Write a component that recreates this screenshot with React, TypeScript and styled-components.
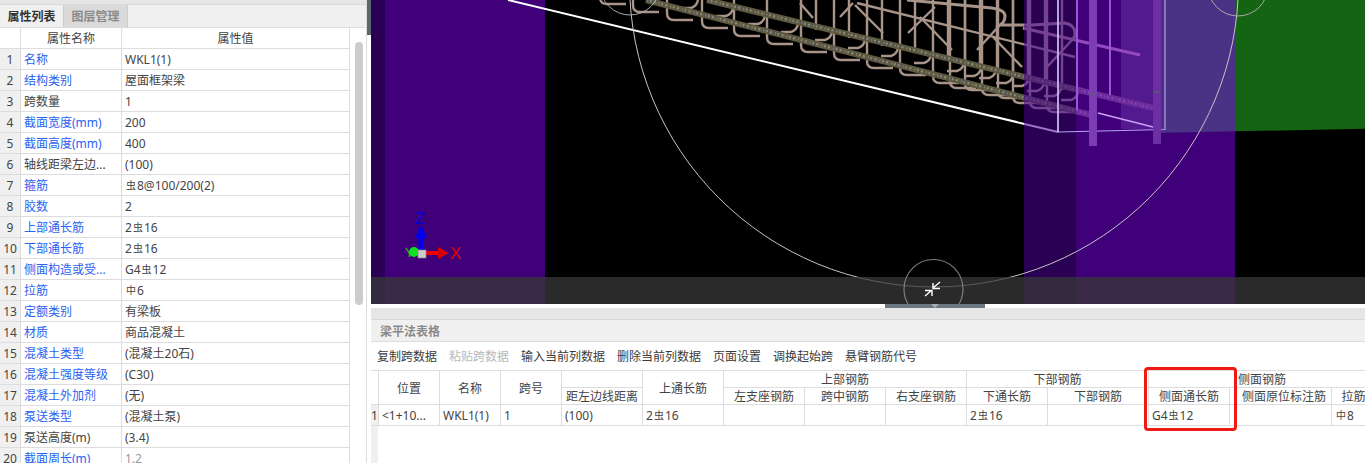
import React from 'react';
import styled, { createGlobalStyle } from 'styled-components';

const GlobalStyle = createGlobalStyle`
  html, body {
    margin: 0;
    padding: 0;
    background: #ffffff;
    overflow: hidden;
  }
  body {
    font-family: "Noto Sans", "Noto Sans CJK SC", sans-serif;
    font-size: 12px;
    color: #444444;
  }
`;

const Page = styled.div`
  display: flex;
  width: 1365px;
  height: 463px;
  overflow: hidden;
`;

/* 左侧属性面板 */
const SidePanel = styled.div`
  display: flex;
  flex-direction: column;
  flex: none;
  width: 366px;
  border-right: 1px solid #dddddd;
`;

const PanelTop = styled.div`
  flex: none;
  height: 4px;
  background: #e6e6e6;
  border-bottom: 1px solid #dadada;
`;

const TabBar = styled.div`
  display: flex;
  flex: none;
  height: 22px;
  background: #f0f0f0;
  border-bottom: 1px solid #dcdcdc;
`;

const Tab = styled.div<{ $active?: boolean }>`
  display: flex;
  align-items: center;
  justify-content: center;
  width: 63px;
  font-weight: 700;
  color: ${(p) => (p.$active ? '#333333' : '#8a8a8a')};
  background: ${(p) => (p.$active ? '#f0f0f0' : '#dadada')};
  border-right: 1px solid #cccccc;
`;

const SideBody = styled.div`
  display: flex;
  flex: 1;
  min-height: 0;
  overflow: hidden;
`;

const PropTable = styled.div`
  flex: none;
  width: 350px;
`;

const PropRow = styled.div`
  display: grid;
  grid-template-columns: 21px 101px 228px;
  height: 21px;
`;

const PropCell = styled.div<{ $kind?: 'index' | 'head' | 'link' | 'muted' }>`
  display: flex;
  align-items: center;
  justify-content: ${(p) => (p.$kind === 'index' || p.$kind === 'head' ? 'center' : 'flex-start')};
  padding: ${(p) => (p.$kind === 'index' ? '0' : p.$kind === 'head' ? '0' : '0 3px')};
  border-right: 1px solid #dddddd;
  border-bottom: 1px solid #dddddd;
  white-space: nowrap;
  overflow: hidden;
  background: ${(p) => (p.$kind === 'index' ? '#f0f0f0' : '#ffffff')};
  color: ${(p) => (p.$kind === 'link' ? '#2a62f2' : p.$kind === 'muted' ? '#9a9a9a' : '#444444')};
`;

const ScrollTrack = styled.div`
  flex: 1;
  padding: 14px 0 0 5px;
`;

const ScrollThumb = styled.div`
  width: 8px;
  height: 263px;
  border-radius: 4px;
  background: #cccccc;
`;

const SideEdge = styled.div`
  flex: none;
  width: 4px;
  height: 463px;
`;

const SideEdgeThumb = styled.div`
  height: 35px;
  background: #5c686c;
`;

/* 右侧 */
const MainColumn = styled.div`
  display: flex;
  flex-direction: column;
  flex: 1;
  min-width: 0;
`;

const Viewport = styled.svg`
  display: block;
  flex: none;
  width: 994px;
  height: 304px;
`;

const SplitStrip = styled.div`
  flex: none;
  height: 4px;
  padding-left: 514px;
`;

const SplitHandle = styled.div`
  display: flex;
  justify-content: center;
  width: 100px;
  height: 4px;
  background: #6a7680;

  &::after {
    content: '';
    border-left: 4px solid transparent;
    border-right: 4px solid transparent;
    border-top: 4px solid #a8aeb2;
  }
`;

const GridPanelHead = styled.div`
  flex: none;
  height: 11px;
  background: #e6e6e6;
  border-bottom: 1px solid #d8d8d8;
`;

const GridTitle = styled.div`
  flex: none;
  display: flex;
  align-items: center;
  height: 21px;
  padding-left: 9px;
  background: #f0f0f0;
  border-bottom: 1px solid #dcdcdc;
  font-weight: 700;
  color: #8a8a8a;
`;

const Toolbar = styled.div`
  flex: none;
  display: flex;
  align-items: center;
  gap: 12px;
  height: 28px;
  padding-left: 6px;
`;

const ToolButton = styled.span<{ $disabled?: boolean }>`
  color: ${(p) => (p.$disabled ? '#b8b8b8' : '#3c3c3c')};
  white-space: nowrap;
`;

const TableArea = styled.div`
  position: relative;
  display: flex;
  flex-direction: column;
  flex: 1;
  min-height: 0;
`;

const SpanGrid = styled.div`
  display: grid;
  flex: none;
  grid-template-columns: 8px 61px 61px 61px 81px 81px 81px 81px 81px 81px 101px 81px 7px 95px 44px;
  grid-template-rows: 17px 17px 21px;
  width: 1004px;
  border-top: 1px solid #dddddd;
`;

const SpanCell = styled.div<{ $span?: number; $rows?: number; $data?: boolean; $gutter?: boolean }>`
  display: flex;
  align-items: center;
  justify-content: ${(p) => (p.$data ? 'flex-start' : 'center')};
  grid-column: span ${(p) => p.$span ?? 1};
  grid-row: span ${(p) => p.$rows ?? 1};
  padding-left: ${(p) => (p.$data ? '3px' : '0')};
  border-right: 1px solid #dddddd;
  border-bottom: 1px solid #dddddd;
  background: ${(p) => (p.$gutter ? '#f0f0f0' : '#ffffff')};
  white-space: nowrap;
  overflow: hidden;
`;

const GutterFill = styled.div`
  flex: 1;
  width: 7px;
  background: #f0f0f0;
`;

const RedMark = styled.div`
  position: absolute;
  left: 773px;
  top: -3px;
  box-sizing: border-box;
  width: 93px;
  height: 64px;
  border: 3px solid #f01a14;
  border-radius: 4px;
`;

const BarSign = styled.span`
  display: inline-block;
  width: 12px;
  font-size: 10px;
  line-height: 10px;
  text-align: center;
  vertical-align: 2px;
`;

const Bar = ({ grade = 3 }: { grade?: number }) => <BarSign>{grade === 3 ? '虫' : '中'}</BarSign>;

type Prop = { name: string; value: React.ReactNode; link?: boolean; muted?: boolean };

const props: Prop[] = [
  { name: '名称', value: 'WKL1(1)', link: true },
  { name: '结构类别', value: '屋面框架梁', link: true },
  { name: '跨数量', value: '1' },
  { name: '截面宽度(mm)', value: '200', link: true },
  { name: '截面高度(mm)', value: '400', link: true },
  { name: '轴线距梁左边...', value: '(100)' },
  { name: '箍筋', value: <><Bar />8@100/200(2)</>, link: true },
  { name: '胶数', value: '2', link: true },
  { name: '上部通长筋', value: <>2<Bar />16</>, link: true },
  { name: '下部通长筋', value: <>2<Bar />16</>, link: true },
  { name: '侧面构造或受...', value: <>G4<Bar />12</>, link: true },
  { name: '拉筋', value: <><Bar grade={1} />6</>, link: true },
  { name: '定额类别', value: '有梁板', link: true },
  { name: '材质', value: '商品混凝土', link: true },
  { name: '混凝土类型', value: '(混凝土20石)', link: true },
  { name: '混凝土强度等级', value: '(C30)', link: true },
  { name: '混凝土外加剂', value: '(无)', link: true },
  { name: '泵送类型', value: '(混凝土泵)', link: true },
  { name: '泵送高度(m)', value: '(3.4)' },
  { name: '截面周长(m)', value: '1.2', link: true, muted: true },
];

const tools = ['复制跨数据', '粘贴跨数据', '输入当前列数据', '删除当前列数据', '页面设置', '调换起始跨', '悬臂钢筋代号'];

// 箍筋底角位置，取自截图
const stirrups: [number, number][] = [
  [600, 4], [633, 12], [667, 20], [702, 28], [734, 36], [767, 44], [801, 52], [834, 60], [867, 68], [900, 75],
  [933, 83], [950, 88], [965, 90], [982, 95], [998, 98], [1013, 103], [1030, 108], [1047, 112],
];

const ties = [
  'M840 17L853 3', 'M855 5L883 33', 'M908 33L935 7', 'M920 17L952 50', 'M977 50L1000 25', 'M993 37L1022 67',
  'M800 3L813 18', 'M1047 67L1072 40',
];

const Cage = () => (
  <g fill="none" stroke="#a89488" strokeWidth="2.4">
    {stirrups.map(([x, y]) => (
      <g key={x}>
        <path d={`M${x} 0V${y - 7}Q${x} ${y} ${x + 7} ${y}H${x + 26}`} />
        <path d={`M${x + 14} ${y - 12}H${x + 24}Q${x + 30} ${y - 14} ${x + 31} ${y - 20}`} />
        {x >= 800 && <path d={`M${x + 15} 0V${y - 22}`} />}
      </g>
    ))}
    {ties.map((d) => <path key={d} d={d} />)}
    <path d="M857 3L1075 57" />
    <path d="M907 0L992 8Q1005 10 1005 16Q1005 22 1000 25H1032L1065 23Q1075 25 1075 33Q1075 38 1072 40" strokeWidth="3" />
    <path d="M1023 28L1140 55" strokeWidth="3" />
  </g>
);

const RebarLine = ({ d }: { d: string }) => (
  <g fill="none">
    <path d={d} stroke="#5f5b3f" strokeWidth="6" />
    <path d={d} stroke="#8c8a78" strokeWidth="2" strokeDasharray="2 2" />
    <path d={d} stroke="#4a4a5c" strokeWidth="4" strokeDasharray="1 5" />
  </g>
);

const Scene = () => (
  <Viewport viewBox="371 0 994 304">
    <rect x="371" y="0" width="994" height="304" fill="#000000" />
    <rect x="371" y="0" width="14" height="304" fill="#2a0055" />
    <rect x="385" y="0" width="160" height="304" fill="#40007a" />
    <path d="M1153 0H1365V128.700L1153 133Z" fill="#146414" />
    <rect x="1121" y="0" width="32" height="129" fill="#243428" />
    <Cage />
    <RebarLine d="M707 0L1153 108" />
    <RebarLine d="M646 0L1095 116" />
    <path d="M508 0L1058 132" stroke="#ffffff" strokeWidth="2" />
    <rect x="1024" y="0" width="52" height="304" fill="#4c009b" fillOpacity="0.55" />
    <rect x="1076" y="0" width="159" height="304" fill="#8000f4" fillOpacity="0.5" />
    <path d="M1058 0V132L1165 129.500V0" fill="none" stroke="#b8a0f0" strokeWidth="1.200" />
    <path d="M1058 0V132" stroke="#e0d4f4" strokeWidth="1.200" />
    <path d="M1098 113L1153 127" stroke="#c8a0f8" strokeWidth="1.500" />
    <path d="M1077 0V110M1110 0V95" stroke="#9a55d8" strokeWidth="2" />
    <rect x="1089" y="0" width="8" height="146" fill="#7c3cb4" />
    <rect x="1153" y="0" width="8" height="144" fill="#6c30a4" />
    <path d="M1090 94h6M1154 92h6" stroke="#3c8040" />
    <circle cx="934" cy="-17.500" r="304.500" fill="none" stroke="#c4c4c4" />
    <rect x="371" y="277" width="994" height="27" fill="#383838" fillOpacity="0.75" />
    <circle cx="630" cy="-15" r="30" fill="none" stroke="#aaaaaa" />
    <circle cx="1238" cy="-14" r="30" fill="none" stroke="#aaaaaa" />
    <circle cx="933.500" cy="289" r="29.500" fill="none" stroke="#7c7c7c" strokeWidth="1.200" />
    <path d="M940 282L933 288M933 283V288.500H940M925 296L932 290M925 290.500H932V296" fill="none" stroke="#ffffff" strokeWidth="1.400" />
    <text x="415" y="224" fontFamily="Liberation Sans" fontSize="17" fill="#0000dc">Z</text>
    <text x="450" y="259" fontFamily="Liberation Sans" fontSize="17" fill="#e00000">X</text>
    <text x="405" y="257" fontFamily="Liberation Sans" fontSize="13" fill="#20c020">Y</text>
    <rect x="418.500" y="238" width="5" height="14" fill="#0000f0" />
    <path d="M421 225L415 238H427Z" fill="#0000f0" />
    <rect x="425" y="251" width="16" height="4" fill="#f00000" />
    <path d="M438 247L449 253L438 259Z" fill="#d80000" />
    <circle cx="414" cy="252" r="5" fill="#10e020" />
    <rect x="418" y="250" width="8" height="8" fill="#cccccc" stroke="#888888" strokeWidth="0.600" />
  </Viewport>
);

export default function App() {
  return (
    <Page>
      <GlobalStyle />
      <SidePanel>
        <PanelTop />
        <TabBar>
          <Tab $active>属性列表</Tab>
          <Tab>图层管理</Tab>
        </TabBar>
        <SideBody>
          <PropTable>
            <PropRow>
              <PropCell $kind="head" />
              <PropCell $kind="head">属性名称</PropCell>
              <PropCell $kind="head">属性值</PropCell>
            </PropRow>
            {props.map((row, i) => (
              <PropRow key={row.name}>
                <PropCell $kind="index">{i + 1}</PropCell>
                <PropCell $kind={row.link ? 'link' : undefined}>{row.name}</PropCell>
                <PropCell $kind={row.muted ? 'muted' : undefined}>{row.value}</PropCell>
              </PropRow>
            ))}
          </PropTable>
          <ScrollTrack>
            <ScrollThumb />
          </ScrollTrack>
        </SideBody>
      </SidePanel>
      <SideEdge>
        <SideEdgeThumb />
      </SideEdge>
      <MainColumn>
        <Scene />
        <SplitStrip>
          <SplitHandle />
        </SplitStrip>
        <GridPanelHead />
        <GridTitle>梁平法表格</GridTitle>
        <Toolbar>
          {tools.map((t, i) => (
            <ToolButton key={t} $disabled={i === 1}>{t}</ToolButton>
          ))}
        </Toolbar>
        <TableArea>
          <SpanGrid>
            <SpanCell $rows={2} />
            <SpanCell $rows={2}>位置</SpanCell>
            <SpanCell $rows={2}>名称</SpanCell>
            <SpanCell $rows={2}>跨号</SpanCell>
            <SpanCell />
            <SpanCell $rows={2}>上通长筋</SpanCell>
            <SpanCell $span={3}>上部钢筋</SpanCell>
            <SpanCell $span={2}>下部钢筋</SpanCell>
            <SpanCell $span={4}>侧面钢筋</SpanCell>

            <SpanCell>距左边线距离</SpanCell>
            <SpanCell>左支座钢筋</SpanCell>
            <SpanCell>跨中钢筋</SpanCell>
            <SpanCell>右支座钢筋</SpanCell>
            <SpanCell>下通长筋</SpanCell>
            <SpanCell>下部钢筋</SpanCell>
            <SpanCell>侧面通长筋</SpanCell>
            <SpanCell />
            <SpanCell>侧面原位标注筋</SpanCell>
            <SpanCell>拉筋</SpanCell>

            <SpanCell $gutter>1</SpanCell>
            <SpanCell $data>&lt;1+10...</SpanCell>
            <SpanCell $data>WKL1(1)</SpanCell>
            <SpanCell $data>1</SpanCell>
            <SpanCell $data>(100)</SpanCell>
            <SpanCell $data>2<Bar />16</SpanCell>
            <SpanCell $data />
            <SpanCell $data />
            <SpanCell $data />
            <SpanCell $data>2<Bar />16</SpanCell>
            <SpanCell $data />
            <SpanCell $data>G4<Bar />12</SpanCell>
            <SpanCell $data />
            <SpanCell $data />
            <SpanCell $data><Bar grade={1} />8</SpanCell>
          </SpanGrid>
          <GutterFill />
          <RedMark />
        </TableArea>
      </MainColumn>
    </Page>
  );
}
